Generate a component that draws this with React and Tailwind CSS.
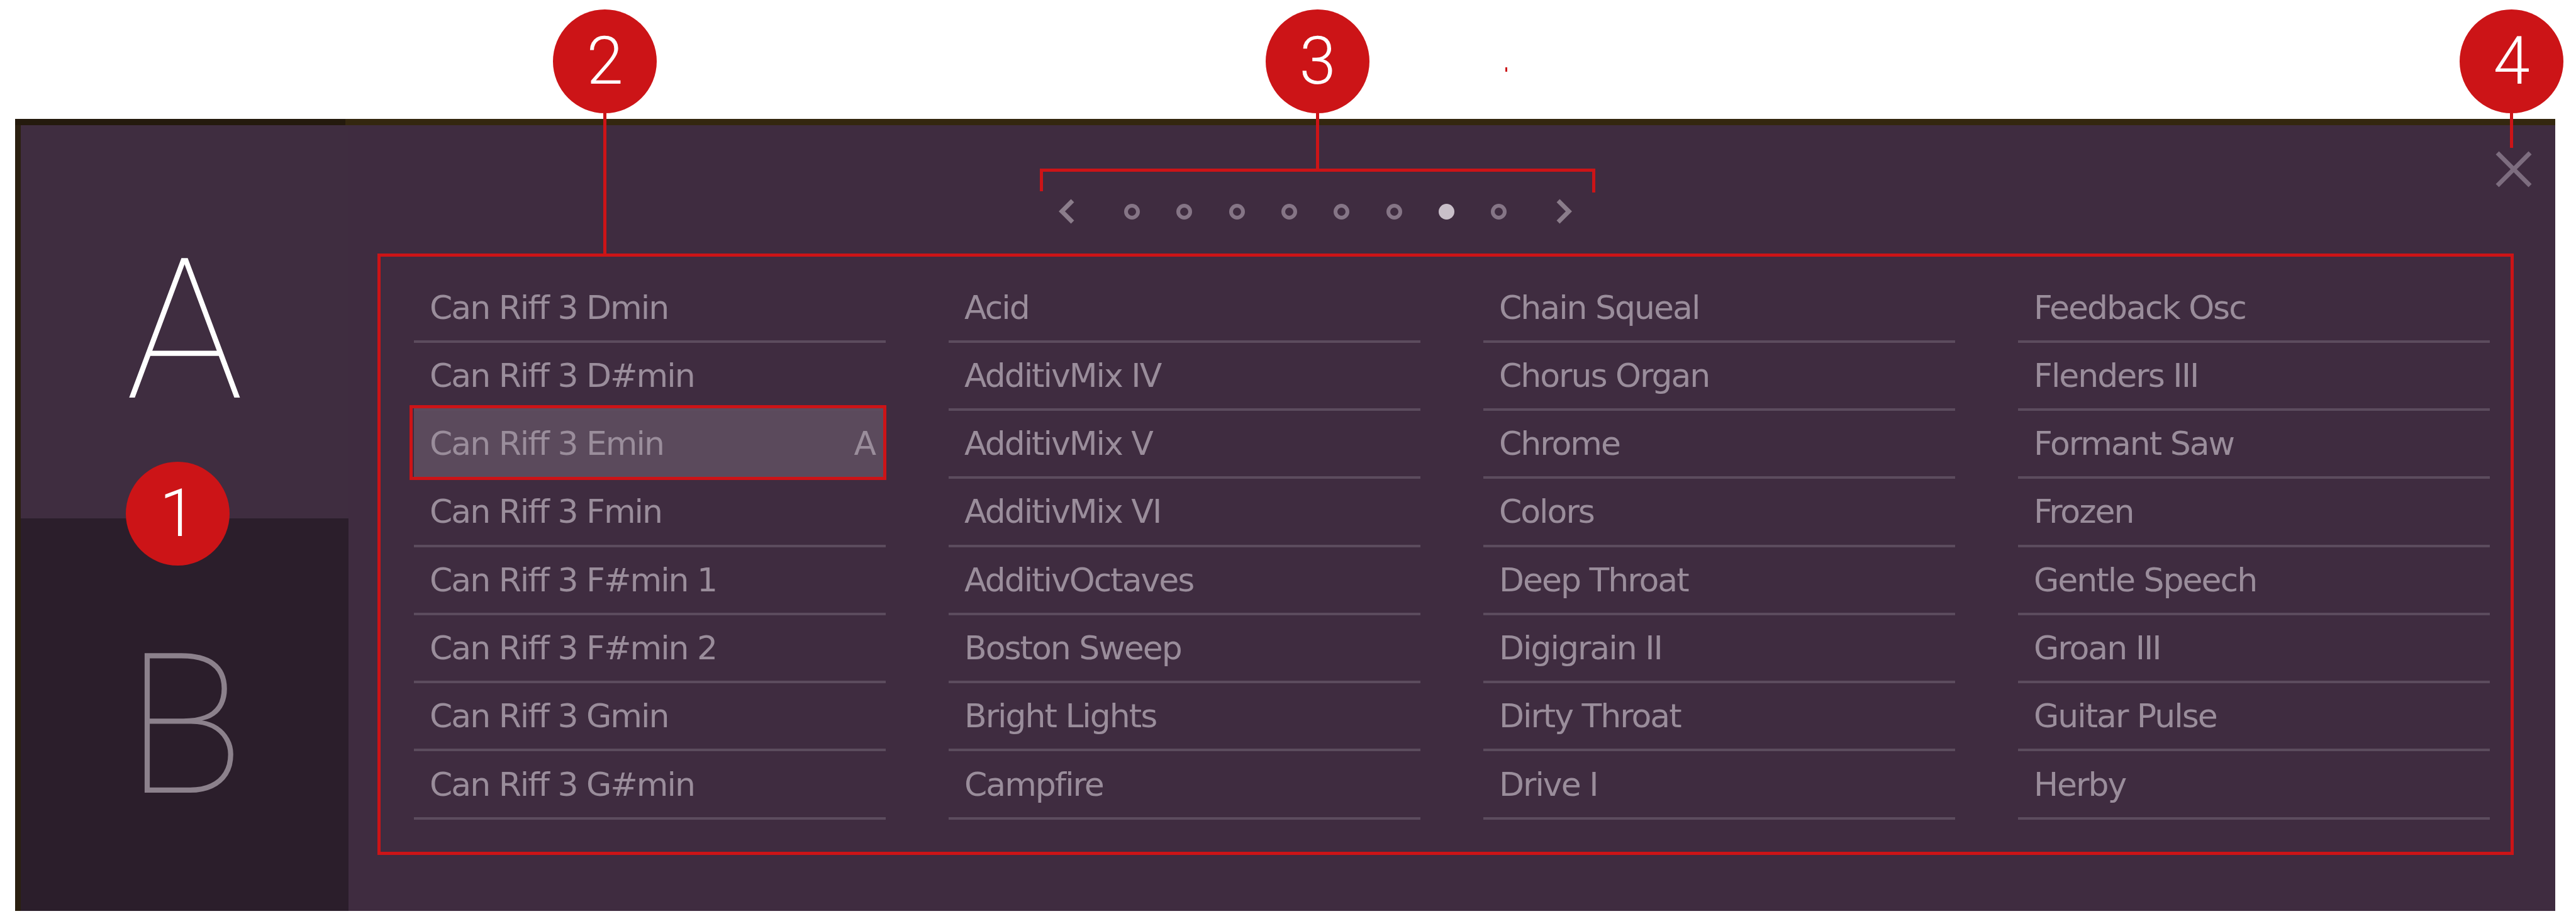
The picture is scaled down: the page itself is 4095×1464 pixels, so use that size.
import React from "react";

const cols = [
  ["Can Riff 3 Dmin", "Can Riff 3 D#min", "Can Riff 3 Emin", "Can Riff 3 Fmin", "Can Riff 3 F#min 1", "Can Riff 3 F#min 2", "Can Riff 3 Gmin", "Can Riff 3 G#min"],
  ["Acid", "AdditivMix IV", "AdditivMix V", "AdditivMix VI", "AdditivOctaves", "Boston Sweep", "Bright Lights", "Campfire"],
  ["Chain Squeal", "Chorus Organ", "Chrome", "Colors", "Deep Throat", "Digigrain II", "Dirty Throat", "Drive I"],
  ["Feedback Osc", "Flenders III", "Formant Saw", "Frozen", "Gentle Speech", "Groan III", "Guitar Pulse", "Herby"],
];

function Badge({ n, className }) {
  return (
    <div
      className={
        "absolute w-[165px] h-[165px] rounded-full bg-[#cc1417] flex items-center justify-center text-white font-['Roboto',sans-serif] font-light text-[105px] leading-none " +
        className
      }
    >
      {n}
    </div>
  );
}

function Row({ name, ci, ri }) {
  const hl = ci === 0 && ri === 2;
  return (
    <div
      className={
        "h-[108.3px] border-b-4 border-[#5c4c5e] flex items-center pl-[25px] " +
        (hl ? "bg-[#5b4a5c]" : "")
      }
    >
      <span>{name}</span>
      {hl && <span className="ml-auto pr-[17px]">A</span>}
    </div>
  );
}

export default function App() {
  return (
    <div className="relative w-[4095px] h-[1464px] bg-white overflow-hidden pt-[189px] pl-[24px]">
      {/* Frame */}
      <div className="w-[4038px] h-[1259px] flex flex-col">
        <div className="h-[10px] flex">
          <div className="w-[525px] bg-[#241a0d]" />
          <div className="flex-1 bg-[#34270f]" />
        </div>
        <div className="flex-1 flex">
          <div className="w-[9px] bg-[#2b2011]" />
          {/* Left A/B column */}
          <div className="w-[521px] flex flex-col">
            <div className="h-[625px] bg-[#3f2d40] flex items-center justify-center">
              <span className="mt-[28px] font-['Roboto',sans-serif] font-thin text-[312px] leading-none text-white">A</span>
            </div>
            <div className="flex-1 bg-[#2b1e2b] flex items-center justify-center">
              <span className="mt-[35px] font-['Roboto',sans-serif] font-thin text-[312px] leading-none text-[#8c818c]">B</span>
            </div>
          </div>
          {/* Main */}
          <div className="flex-1 bg-[#3f2c40] flex flex-col">
            <div className="h-[237.4px] flex items-start">
              <div className="ml-[1129px] mt-[116px] h-[42px] flex items-center">
                <svg width="25" height="42" viewBox="0 0 25 42">
                  <polyline points="22,4 5,21 22,38" fill="none" stroke="#8b7d8b" strokeWidth="7" />
                </svg>
                <div className="ml-[79px] mr-[79px] flex items-center gap-[58.33px]">
                  {[0, 1, 2, 3, 4, 5, 6, 7].map((i) =>
                    i === 6 ? (
                      <div key={i} className="w-[25px] h-[25px] rounded-full bg-[#c9bfc9]" />
                    ) : (
                      <div key={i} className="w-[25px] h-[25px] rounded-full border-[6px] border-[#857586]" />
                    )
                  )}
                </div>
                <svg width="25" height="42" viewBox="0 0 25 42">
                  <polyline points="3,4 20,21 3,38" fill="none" stroke="#8b7d8b" strokeWidth="7" />
                </svg>
              </div>
              <div className="ml-auto mt-[41px] mr-[37px]">
                <svg width="58" height="58" viewBox="0 0 58 58">
                  <line x1="3" y1="3" x2="55" y2="55" stroke="#7d6d7f" strokeWidth="7" />
                  <line x1="55" y1="3" x2="3" y2="55" stroke="#7d6d7f" strokeWidth="7" />
                </svg>
              </div>
            </div>
            <div className="ml-[104px] w-[3300px] grid grid-cols-4 gap-x-[100px] font-['DejaVu_Sans',sans-serif] text-[52px] tracking-[-2px] text-[#9a8d9b] leading-none">
              {cols.map((col, ci) => (
                <div key={ci} className="flex flex-col">
                  {col.map((name, ri) => (
                    <Row key={ri} name={name} ci={ci} ri={ri} />
                  ))}
                </div>
              ))}
            </div>
          </div>
        </div>
      </div>

      {/* Annotation overlays */}
      <div className="absolute left-[600px] top-[403px] w-[3396px] h-[956px] border-[5px] border-[#cc1417]" />
      <div className="absolute left-[651px] top-[644px] w-[758px] h-[119px] border-[5px] border-[#cc1417]" />

      <Badge n="1" className="left-[200px] top-[734px]" />
      <Badge n="2" className="left-[879px] top-[15px]" />
      <Badge n="3" className="left-[2012px] top-[15px]" />
      <Badge n="4" className="left-[3910px] top-[15px]" />

      <div className="absolute left-[959px] top-[180px] w-[5px] h-[223px] bg-[#cc1417]" />
      <div className="absolute left-[2092px] top-[180px] w-[5px] h-[90px] bg-[#cc1417]" />
      <div className="absolute left-[1653px] top-[268px] w-[883px] h-[5px] bg-[#cc1417]" />
      <div className="absolute left-[1653px] top-[268px] w-[5px] h-[36px] bg-[#cc1417]" />
      <div className="absolute left-[2531px] top-[268px] w-[5px] h-[38px] bg-[#cc1417]" />
      <div className="absolute left-[3990px] top-[180px] w-[5px] h-[55px] bg-[#cc1417]" />
      <div className="absolute left-[2393px] top-[107px] w-[3px] h-[7px] bg-[#cc1417]" />
    </div>
  );
}
